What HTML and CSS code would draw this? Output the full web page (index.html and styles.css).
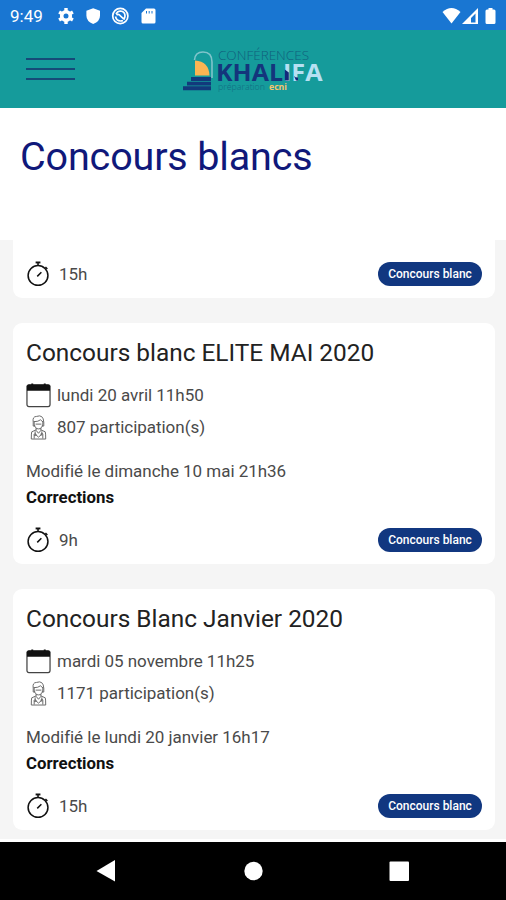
FILE: index.html
```html
<!DOCTYPE html>
<html lang="fr">

<head>
    <meta charset="UTF-8">
    <meta name="viewport" content="width=device-width, initial-scale=1.0">
    <title>Concours blancs</title>
    <link rel="stylesheet" href="styles.css">
</head>

<body>
    <svg class="sprite" width="0" height="0">
        <symbol id="calendar" viewBox="0 0 26 26">
            <rect x="1" y="2.5" width="24" height="22.5" rx="2" fill="#fff" stroke="#444" stroke-width="1.3" />
            <path d="M1 8.5V4q0-2 2-2h20q2 0 2 2v4.500z" fill="#111" />
            <path d="M6.500 1v3M19.500 1v3" stroke="#111" stroke-width="2" />
        </symbol>
        <symbol id="doctor" viewBox="0 0 26 26">
            <g fill="none" stroke="#666" stroke-width="1">
                <path d="M7.500 8Q6.500 2 11 2q7-2.500 7.500 6M8 7.500q5 0 7-2l3 2.500" />
                <path d="M8.500 7v3q1 5 4.500 5t4.500-5V7M7.500 8v4h2M18.500 8v4h-2M10 10h6" />
                <path d="M10.500 14v2.500l2.500 3 2.500-3V14M10.500 16l-4.500 2q-.500 1-.500 7.500h15q0-6.500-.500-7.500l-4.500-2" />
                <path d="M8.500 25v-4M17.500 25v-4M9.500 17.500v3l3.500 3 3.500-3v-3" />
                <circle cx="16.500" cy="20.500" r="1" />
                <circle cx="9.500" cy="21" r="1" />
            </g>
        </symbol>
        <symbol id="timer" viewBox="0 0 26 26">
            <g fill="none" stroke="#111" stroke-width="1.6">
                <circle cx="12.500" cy="14.500" r="10.300" />
                <path d="M12.500 1v3.500M11.700 15.500l4.300-4.300M20.200 5.800l2 2" />
                <path d="M10 1h5" stroke-width="2" />
            </g>
        </symbol>
    </svg>

    <div class="status-bar">
        <span class="time">9:49</span>
        <svg class="status-left" width="100" height="20" viewBox="0 0 100 20" fill="#fff">
            <circle cx="8" cy="10" r="4.300" fill="none" stroke="#fff" stroke-width="3.600" />
            <path d="M8 2v3M8 15v3M1.100 6l2.600 1.500M12.300 12.500l2.600 1.500M1.100 14l2.600-1.500M12.300 7.500l2.600-1.500" stroke="#fff" stroke-width="3.400" />
            <path d="M35.200 2.200l6.800 2.600v5q0 5.600-6.800 8.200-6.800-2.600-6.800-8.200v-5z" />
            <g fill="none" stroke="#fff" stroke-width="1.700">
                <circle cx="62.300" cy="10" r="7.600" />
                <path d="M58 8q1.500-3 4.500-3 4.500.500 4.500 5 0 2-1.500 3.500M57.500 10.500q1 4.500 5 4.500 1.500 0 2.500-.500" />
                <path d="M58.500 9q2-1.500 4 1t4.500 3" />
            </g>
            <path d="M88 2.500h8q1.500 0 1.500 1.500v12q0 1.500-1.500 1.500H85q-1.500 0-1.500-1.500V7z" />
            <path d="M88.500 5v2.500M91.200 5v2.500M94 5v2.500" stroke="#1976d2" stroke-width="1" />
        </svg>
        <svg class="status-right" width="56" height="20" viewBox="0 0 56 20" fill="#fff">
            <path d="M0.500 6q9-8 18 0l-9 11.500z" />
            <path fill-rule="evenodd" d="M20 18L36 2v16zM29 16.500h4.500v-9L29 12z" />
            <path d="M46.500 3.500V2h4v1.500h1.500q1.500 0 1.500 1.500v11.500q0 1.500-1.500 1.500H45q-1.500 0-1.500-1.500V5q0-1.500 1.500-1.500z" />
        </svg>
    </div>

    <header class="header">
        <div class="menu">
            <span></span>
            <span></span>
            <span></span>
        </div>
        <svg class="logo" width="145" height="46" viewBox="0 0 145 46">
            <path d="M12.500 14Q13 6 21 6q9 0 9 10v16" fill="none" stroke="#7fc4cb" stroke-width="1.600" />
            <path d="M13 14.500q14 1 14.500 15H13z" fill="#fbb552" />
            <path d="M9 31h20v4H9zM5 35.700h24v3.800H5zM1 40.200h28v4H1z" fill="#123a7c" />
            <text class="logo-top" x="36" y="13.500" textLength="91" lengthAdjust="spacingAndGlyphs">CONFÉRENCES</text>
            <text class="logo-name" x="34" y="34.500" textLength="67" lengthAdjust="spacingAndGlyphs">KHAL</text>
            <text class="logo-name logo-light" x="101" y="34.500" textLength="39.500" lengthAdjust="spacingAndGlyphs">IFA</text>
            <path d="M102.800 23.500l4 3v8h-4zM112 30q1 1.500 4 1.500v3h-2z" fill="#14287a" />
            <text class="logo-sub" x="36" y="44" textLength="47" lengthAdjust="spacingAndGlyphs">préparation</text>
            <text class="logo-ecni" x="87" y="44" textLength="18" lengthAdjust="spacingAndGlyphs">ecni</text>
        </svg>
    </header>

    <div class="page-title">
        <h1>Concours blancs</h1>
    </div>

    <main class="list">
        <div class="card card-cut">
            <div class="card-footer">
                <svg class="icon"><use href="#timer" /></svg>
                <span class="duration">15h</span>
                <span class="badge">Concours blanc</span>
            </div>
        </div>

        <div class="card">
            <h2>Concours blanc ELITE MAI 2020</h2>
            <div class="row">
                <svg class="icon"><use href="#calendar" /></svg>
                <span>lundi 20 avril 11h50</span>
            </div>
            <div class="row">
                <svg class="icon"><use href="#doctor" /></svg>
                <span>807 participation(s)</span>
            </div>
            <p class="modified">Modifié le dimanche 10 mai 21h36</p>
            <p class="corrections">Corrections</p>
            <div class="card-footer">
                <svg class="icon"><use href="#timer" /></svg>
                <span class="duration">9h</span>
                <span class="badge">Concours blanc</span>
            </div>
        </div>

        <div class="card">
            <h2>Concours Blanc Janvier 2020</h2>
            <div class="row">
                <svg class="icon"><use href="#calendar" /></svg>
                <span>mardi 05 novembre 11h25</span>
            </div>
            <div class="row">
                <svg class="icon"><use href="#doctor" /></svg>
                <span>1171 participation(s)</span>
            </div>
            <p class="modified">Modifié le lundi 20 janvier 16h17</p>
            <p class="corrections">Corrections</p>
            <div class="card-footer">
                <svg class="icon"><use href="#timer" /></svg>
                <span class="duration">15h</span>
                <span class="badge">Concours blanc</span>
            </div>
        </div>
    </main>

    <nav class="nav-bar">
        <svg width="506" height="58" viewBox="0 0 506 58" fill="#fff">
            <path d="M96.500 29l18.500-11v21.500z" />
            <circle cx="253.500" cy="29" r="9.200" />
            <rect x="389.500" y="19.500" width="19.500" height="19.500" rx="1" />
        </svg>
    </nav>
</body>

</html>
```

FILE: styles.css
```css
* {
    box-sizing: border-box;
}

body {
    margin: 0;
    width: 506px;
    height: 900px;
    display: flex;
    flex-direction: column;
    overflow: hidden;
    font-family: Roboto, sans-serif;
    background-color: #f5f5f5;
}

h1,
h2,
p {
    margin: 0;
}

.sprite {
    display: none;
}

.status-bar {
    height: 30px;
    flex: none;
    display: flex;
    align-items: center;
    padding: 1px 8px 0 10px;
    background-color: #1976d2;
    color: #fff;
}

.time {
    width: 48px;
    font-size: 17px;
}

.status-right {
    margin-left: auto;
}

.header {
    height: 78px;
    flex: none;
    display: flex;
    align-items: center;
    padding-left: 26px;
    background-color: #159b9b;
}

.menu {
    width: 49px;
    display: flex;
    flex-direction: column;
    gap: 8px;
}

.menu span {
    height: 2px;
    background-color: #154a78;
}

.logo {
    margin-left: 107px;
    font-family: "Open Sans", sans-serif;
}

.logo-top {
    font-size: 12px;
    font-weight: 300;
    fill: #115f7b;
}

.logo-name {
    font-size: 24px;
    font-weight: 700;
    fill: #14357c;
}

.logo-light {
    fill: #b6e0f2;
}

.logo-sub {
    font-size: 9px;
    font-weight: 300;
    fill: #126c82;
}

.logo-ecni {
    font-size: 9px;
    font-weight: 700;
    fill: #f4c46d;
}

.page-title {
    height: 132px;
    flex: none;
    padding: 24px 20px;
    background-color: #fff;
}

h1 {
    font-size: 39.5px;
    line-height: 49px;
    font-weight: 400;
    letter-spacing: -0.15px;
    color: #10187a;
}

.list {
    flex: none;
    height: 602px;
    display: flex;
    flex-direction: column;
    gap: 25px;
    padding: 0 11px 0 13px;
    border-bottom: 3px solid #fff;
}

.card {
    height: 241px;
    flex: none;
    display: flex;
    flex-direction: column;
    padding: 14px 13px 12px;
    border-radius: 9px;
    background-color: #fff;
}

.card-cut {
    height: 58px;
    border-radius: 0 0 9px 9px;
}

h2 {
    margin-bottom: 14px;
    font-size: 24.4px;
    line-height: 31px;
    font-weight: 400;
    color: #222;
}

.row {
    height: 26px;
    margin-bottom: 6px;
    display: flex;
    align-items: center;
    gap: 6px;
    font-size: 17px;
    letter-spacing: -0.03px;
    color: #4a4a4a;
}

.icon {
    width: 25px;
    height: 26px;
    flex: none;
}

.modified {
    margin-top: 12px;
    font-size: 17px;
    line-height: 26px;
    letter-spacing: -0.03px;
    color: #4a4a4a;
}

.corrections {
    font-size: 16.8px;
    line-height: 27px;
    font-weight: 700;
    color: #111;
}

.card-footer {
    height: 24px;
    margin-top: auto;
    display: flex;
    align-items: center;
}

.duration {
    margin-left: 8px;
    font-size: 17px;
    line-height: 24px;
    padding-bottom: 1px;
    color: #4a4a4a;
}

.badge {
    width: 104px;
    height: 24px;
    margin-left: auto;
    border-radius: 12px;
    background-color: #113780;
    color: #fff;
    font-size: 12px;
    line-height: 24px;
    font-weight: 500;
    text-align: center;
}

.nav-bar {
    height: 58px;
    flex: none;
    background-color: #000;
}
```
